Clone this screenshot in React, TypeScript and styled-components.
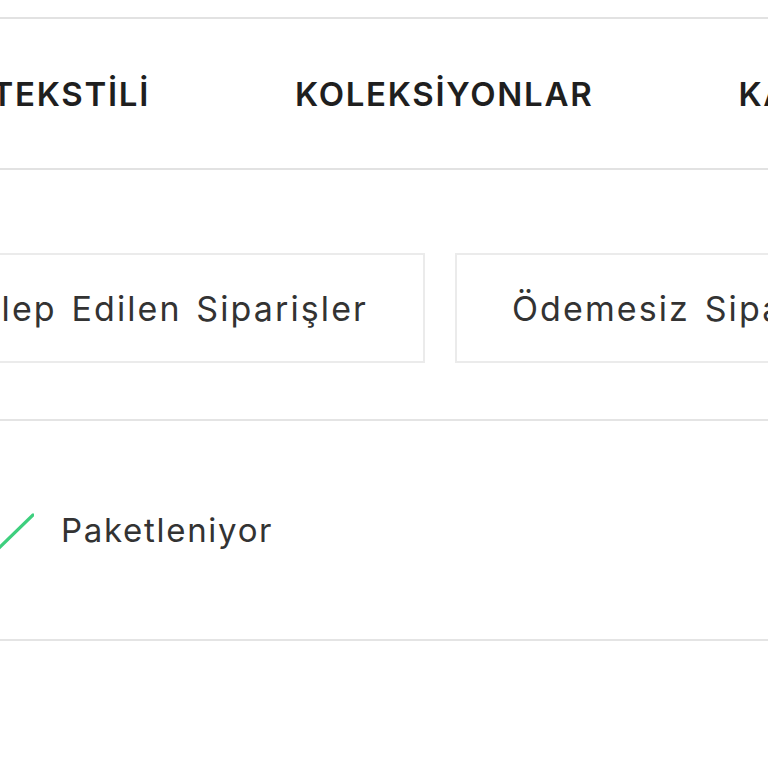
import React from "react";
import styled, { createGlobalStyle } from "styled-components";

const Global = createGlobalStyle`
  html, body { margin: 0; padding: 0; background: #ffffff; }
  body { font-family: Inter, "Noto Sans", sans-serif; color: #2b2b2b; overflow: hidden; }
`;

const Page = styled.div`
  width: 768px;
  overflow: hidden;
`;

const TopStrip = styled.div`
  height: 17px;
`;

const Nav = styled.nav`
  height: 149px;
  border-top: 2px solid #e2e2e2;
  border-bottom: 2px solid #e2e2e2;
  display: flex;
  align-items: center;
  gap: 145px;
  white-space: nowrap;
`;

const NavItem = styled.a<{ $clip?: number }>`
  font-family: Inter, sans-serif;
  font-weight: 600;
  font-size: 33px;
  letter-spacing: 1.7px;
  color: #1f1f1f;
  text-decoration: none;
  display: flex;
  justify-content: flex-end;
  flex: none;
  ${(p) => (p.$clip ? `width: ${p.$clip}px;` : "")}
`;

const TabsSection = styled.section`
  padding: 83px 0 56px;
  border-bottom: 2px solid #e4e4e4;
  display: flex;
  gap: 30px;
  white-space: nowrap;
`;

const TabButton = styled.button<{ $clip?: number }>`
  flex: none;
  height: 110px;
  box-sizing: border-box;
  background: #ffffff;
  border: 2px solid #ebebeb;
  ${(p) => (p.$clip ? `width: ${p.$clip}px; border-left: none; justify-content: flex-end;` : "")}
  padding: 0 55px;
  display: flex;
  align-items: center;
  font-family: Inter, sans-serif;
  font-size: 34px;
  letter-spacing: 2.1px;
  word-spacing: 3px;
  font-weight: 400;
  color: #333333;
`;

const StatusRow = styled.div`
  height: 218px;
  border-bottom: 2px solid #e4e4e4;
  display: flex;
  align-items: center;
  gap: 27px;
  margin-left: -26px;
`;

const StatusText = styled.span`
  font-family: Inter, sans-serif;
  font-size: 33px;
  letter-spacing: 1.7px;
  color: #333333;
`;

const Check = () => (
  <svg width="60" height="44" viewBox="0 0 60 44" style={{ flex: "none" }}>
    <polyline
      points="8,25 24,41 59,7"
      fill="none"
      stroke="#3ecf7e"
      strokeWidth="3.2"
      strokeLinecap="round"
      strokeLinejoin="round"
    />
  </svg>
);

export default function App() {
  return (
    <Page>
      <Global />
      <TopStrip />
      <Nav>
        <NavItem $clip={150}>EV TEKSTİLİ</NavItem>
        <NavItem>KOLEKSİYONLAR</NavItem>
        <NavItem>KAMPANYALAR</NavItem>
      </Nav>
      <TabsSection>
        <TabButton $clip={425}>İptal Talep Edilen Siparişler</TabButton>
        <TabButton>Ödemesiz Siparişler</TabButton>
      </TabsSection>
      <StatusRow>
        <Check />
        <StatusText>Paketleniyor</StatusText>
      </StatusRow>
    </Page>
  );
}
